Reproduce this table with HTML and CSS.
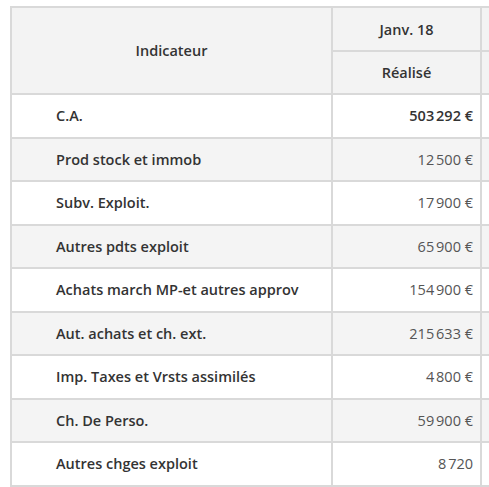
FILE: index.html
```html
<!DOCTYPE html>
<html lang="fr">
<head>
<meta charset="utf-8">
<title>Indicateurs</title>
<link rel="stylesheet" href="styles.css">
</head>
<body>
<table class="grid">
  <colgroup>
    <col class="col-label">
    <col class="col-val">
    <col class="col-val">
  </colgroup>
  <thead>
    <tr>
      <th class="h-ind" rowspan="2">Indicateur</th>
      <th class="h-month">Janv. 18</th>
      <th class="h-month"></th>
    </tr>
    <tr>
      <th class="h-sub">Réalisé</th>
      <th class="h-sub"></th>
    </tr>
  </thead>
  <tbody>
    <tr><td class="lbl">C.A.</td><td class="num strong">503&#8239;292&nbsp;€</td><td class="num"></td></tr>
    <tr class="alt"><td class="lbl">Prod stock et immob</td><td class="num">12&#8239;500&nbsp;€</td><td class="num"></td></tr>
    <tr><td class="lbl">Subv. Exploit.</td><td class="num">17&#8239;900&nbsp;€</td><td class="num"></td></tr>
    <tr class="alt"><td class="lbl">Autres pdts exploit</td><td class="num">65&#8239;900&nbsp;€</td><td class="num"></td></tr>
    <tr><td class="lbl">Achats march MP-et autres approv</td><td class="num">154&#8239;900&nbsp;€</td><td class="num"></td></tr>
    <tr class="alt"><td class="lbl">Aut. achats et ch. ext.</td><td class="num">215&#8239;633&nbsp;€</td><td class="num"></td></tr>
    <tr><td class="lbl">Imp. Taxes et Vrsts assimilés</td><td class="num">4&#8239;800&nbsp;€</td><td class="num"></td></tr>
    <tr class="alt"><td class="lbl">Ch. De Perso.</td><td class="num">59&#8239;900&nbsp;€</td><td class="num"></td></tr>
    <tr><td class="lbl">Autres chges exploit</td><td class="num">8&#8239;720</td><td class="num"></td></tr>
  </tbody>
</table>
</body>
</html>
```

FILE: styles.css
```css
html, body {
  margin: 0;
  padding: 0;
  overflow: hidden;
  background: #ffffff;
}

body {
  padding: 6px 0 0 10px;
  font-family: "Open Sans", "Noto Sans", "Liberation Sans", sans-serif;
  font-size: 14.5px;
  color: #333333;
}

.grid {
  table-layout: fixed;
  width: 620px;
  border-collapse: separate;
  border-spacing: 0;
  border-top: 2px solid #d9d9d9;
  border-left: 2px solid #d9d9d9;
}

.col-label { width: 321px; }
.col-val { width: 149px; }

.grid th,
.grid td {
  border-right: 2px solid #d9d9d9;
  border-bottom: 2px solid #d9d9d9;
  padding: 0;
  overflow: hidden;
  white-space: nowrap;
}

.grid th {
  background: #f3f3f3;
  font-weight: 600;
  text-align: center;
  color: #333333;
}

.grid .h-month { height: 42px; }
.grid .h-sub { height: 41px; }

.grid td { height: 41.5px; }

.grid .alt td { background: #f4f4f4; }

.grid td.lbl {
  padding-left: 44px;
  font-weight: 600;
  text-align: left;
  color: #333333;
}

.grid td.num {
  text-align: right;
  padding-right: 7px;
  color: #555555;
  font-weight: 400;
}

.grid td.num.strong {
  font-weight: 600;
  color: #333333;
}
```
